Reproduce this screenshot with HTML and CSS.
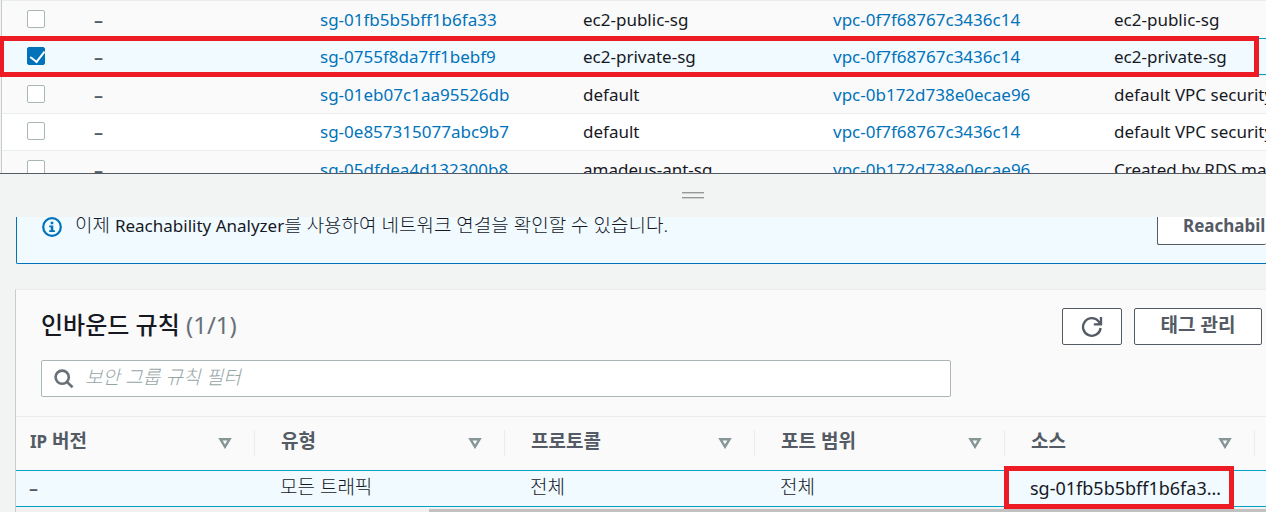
FILE: index.html
```html
<!DOCTYPE html>
<html lang="ko">
<head>
<meta charset="utf-8">
<title>보안 그룹</title>
<link rel="stylesheet" href="styles.css">
</head>
<body>
<main class="app">
  <section class="groups" aria-label="보안 그룹">
    <table class="groups-table">
      <colgroup><col class="col-check"><col class="col-name"><col class="col-id"><col class="col-group"><col class="col-vpc"><col class="col-desc"></colgroup>
      <tbody>
        <tr>
          <td><input class="check" type="checkbox" aria-label="sg-01fb5b5bff1b6fa33"></td><td class="dash">–</td>
          <td><a href="#">sg-01fb5b5bff1b6fa33</a></td><td>ec2-public-sg</td>
          <td><a href="#">vpc-0f7f68767c3436c14</a></td><td>ec2-public-sg</td>
        </tr>
        <tr class="selected">
          <td><input class="check" type="checkbox" checked aria-label="sg-0755f8da7ff1bebf9"></td><td class="dash">–</td>
          <td><a href="#">sg-0755f8da7ff1bebf9</a></td><td>ec2-private-sg</td>
          <td><a href="#">vpc-0f7f68767c3436c14</a></td><td>ec2-private-sg</td>
        </tr>
        <tr>
          <td><input class="check" type="checkbox" aria-label="sg-01eb07c1aa95526db"></td><td class="dash">–</td>
          <td><a href="#">sg-01eb07c1aa95526db</a></td><td>default</td>
          <td><a href="#">vpc-0b172d738e0ecae96</a></td><td>default VPC security group</td>
        </tr>
        <tr>
          <td><input class="check" type="checkbox" aria-label="sg-0e857315077abc9b7"></td><td class="dash">–</td>
          <td><a href="#">sg-0e857315077abc9b7</a></td><td>default</td>
          <td><a href="#">vpc-0f7f68767c3436c14</a></td><td>default VPC security group</td>
        </tr>
        <tr>
          <td><input class="check" type="checkbox" aria-label="sg-05dfdea4d132300b8"></td><td class="dash">–</td>
          <td><a href="#">sg-05dfdea4d132300b8</a></td><td>amadeus-ant-sg</td>
          <td><a href="#">vpc-0b172d738e0ecae96</a></td><td>Created by RDS management console</td>
        </tr>
      </tbody>
    </table>
    <div class="mark mark-group"></div>
  </section>

  <div class="splitter"><span class="grip"></span></div>

  <section class="details">
    <div class="alert">
      <svg class="info" viewBox="0 0 20 20" aria-hidden="true"><circle cx="10" cy="10" r="8.8" fill="none" stroke="#0073bb" stroke-width="2.2"/><path d="M8.7 4.8h2.6v2.4H8.7zM7.2 8.4h4.1v4.8h1.6v1.9H7.2v-1.9h1.6v-2.9H7.2z" fill="#0073bb"/></svg>
      <p class="alert-text">이제 <span class="latin">Reachability Analyzer</span>를 사용하여 네트워크 연결을 확인할 수 있습니다.</p>
      <button class="btn btn-alert" type="button">Reachability Analyzer</button>
    </div>

    <div class="card">
      <header class="card-head">
        <h2 class="title">인바운드 규칙 <span class="count">(1/1)</span></h2>
        <div class="actions">
          <button class="btn btn-icon" type="button" aria-label="새로 고침"><svg class="refresh" viewBox="0 0 22 22" fill="none" stroke="#545b64" stroke-width="2.3" aria-hidden="true"><path d="M19.6 12A8.8 8.8 0 1 1 17.8 5.6L19 7.2"/><path d="M20 1v7.3h-7.2"/><path d="M19.5 4.5v3.3h-3.8z" fill="#545b64" stroke="none"/></svg></button>
          <button class="btn btn-tag" type="button">태그 관리</button>
        </div>
      </header>
      <label class="search">
        <svg class="lens" viewBox="0 0 20 20" fill="none" stroke="#687078" stroke-width="2.6" aria-hidden="true"><circle cx="8.2" cy="8.2" r="6.6"/><path d="M13 13l5.6 5.2"/></svg>
        <input class="search-input" type="text" placeholder="보안 그룹 규칙 필터" aria-label="보안 그룹 규칙 필터">
      </label>
      <table class="rules">
        <colgroup><col class="rule-first"><col class="rule"><col class="rule"><col class="rule"><col class="rule"><col class="rule-rest"></colgroup>
        <thead>
          <tr>
            <th><div class="th"><span><span class="th-latin">IP</span> 버전</span><svg class="sort" viewBox="0 0 14 12"><path d="M2.4 2.2h9.2L7 9.8z"/></svg></div></th>
            <th><div class="th">유형<svg class="sort" viewBox="0 0 14 12"><path d="M2.4 2.2h9.2L7 9.8z"/></svg></div></th>
            <th><div class="th">프로토콜<svg class="sort" viewBox="0 0 14 12"><path d="M2.4 2.2h9.2L7 9.8z"/></svg></div></th>
            <th><div class="th">포트 범위<svg class="sort" viewBox="0 0 14 12"><path d="M2.4 2.2h9.2L7 9.8z"/></svg></div></th>
            <th><div class="th">소스<svg class="sort" viewBox="0 0 14 12"><path d="M2.4 2.2h9.2L7 9.8z"/></svg></div></th>
            <td></td>
          </tr>
        </thead>
        <tbody>
          <tr>
            <td class="dash">–</td><td class="ko">모든 트래픽</td><td class="ko">전체</td><td class="ko">전체</td>
            <td class="source">sg-01fb5b5bff1b6fa3…<div class="mark mark-source"></div></td><td></td>
          </tr>
        </tbody>
      </table>
      <div class="scroll"><div class="thumb"></div></div>
    </div>
  </section>
</main>
</body>
</html>
```
FILE: styles.css
```css
* { box-sizing: border-box; }

body {
  margin: 0;
  background: #f2f3f3;
  color: #16191f;
  font: 17px/22px "Noto Sans", "Noto Sans CJK KR", sans-serif;
}

.app {
  display: flex;
  flex-direction: column;
  height: 100vh;
  overflow: hidden;
}

a { color: #0073bb; text-decoration: none; }

/* security group list */
.groups {
  position: relative;
  flex: none;
  height: 174px;
  padding-left: 1px;
  overflow: hidden;
  border-bottom: 1px solid #545b64;
}

.groups-table {
  width: 100%;
  table-layout: fixed;
  border-collapse: separate;
  border-spacing: 0;
  border-left: 1px solid #c8cccc;
  white-space: nowrap;
}

.col-check { width: 92px; }
.col-name { width: 226px; }
.col-id { width: 263px; }
.col-group { width: 250px; }
.col-vpc { width: 281px; }

.groups-table td {
  height: 37px;
  padding: 0;
  border-top: 1px solid #eaeded;
  background: #fafafa;
}

.groups-table tr:nth-child(odd) td { height: 38px; }
.groups-table tr:nth-child(even) td { background: #fff; }

.groups-table tr.selected td {
  border-top-color: #00a1c9;
  border-bottom: 1px solid #00a1c9;
  background: #f1faff;
}

.groups-table td:first-child { padding: 0 0 2px 25px; }
.dash { color: #545b64; font-size: 18px; font-weight: 600; }

.check {
  display: block;
  appearance: none;
  width: 18px;
  height: 18px;
  margin: 0;
  border: 1px solid #aab7b8;
  border-radius: 2px;
  background: #fff;
}

.check:checked {
  border-color: #0073bb;
  background: #0073bb;
}

.check:checked::before {
  content: "";
  display: block;
  width: 7px;
  height: 12px;
  margin-left: 5px;
  border: solid #fff;
  border-width: 0 2px 2px 0;
  transform: rotate(38deg);
}

.mark {
  position: absolute;
  border: 5px solid #ed1c24;
  pointer-events: none;
}

.mark-group { top: 36px; right: 7px; left: -1px; height: 41px; }

/* split panel handle */
.splitter {
  display: flex;
  flex: none;
  align-items: center;
  justify-content: center;
  height: 43px;
  padding: 0 0 2px 120px;
}

.grip {
  width: 22px;
  height: 6px;
  border: solid #969999;
  border-width: 1px 0;
  box-shadow: 0 1px #cfd1d1, inset 0 1px #cfd1d1;
}

.details {
  flex: 1;
  min-height: 0;
  padding-left: 15px;
  overflow: hidden;
}

.alert {
  display: flex;
  height: 47px;
  margin-left: 1px;
  padding-left: 25px;
  border: solid #0073bb;
  border-width: 0 0 1px 1px;
  border-radius: 0 0 0 2px;
  background: #f1faff;
}

.info { flex: none; width: 20px; height: 20px; }

.alert-text {
  flex: 1;
  margin: -3px 0 0 13px;
  font-size: 19px;
  font-weight: 300;
  white-space: nowrap;
}

.latin { font-size: 17px; font-weight: 400; }

.btn {
  flex: none;
  height: 37px;
  padding: 0;
  border: 1px solid #545b64;
  border-radius: 2px;
  background: #fff;
  color: #545b64;
  font: 700 17px/22px "Noto Sans", "Noto Sans CJK KR", sans-serif;
  white-space: nowrap;
}

.btn-alert {
  width: 109px;
  margin-top: -9px;
  padding: 0 0 2px 25px;
  overflow: hidden;
  border-right: 0;
  text-align: left;
}

.card {
  margin-top: 25px;
  border: solid #eaeded;
  border-width: 1px 0 0 1px;
  border-left-color: #c8cccc;
  background: #fafafa;
}

.card-head {
  display: flex;
  align-items: flex-start;
  justify-content: space-between;
  padding: 18px 4px 15px 25px;
}

.title {
  margin: 0;
  font: 500 24px/34px "Noto Sans", "Noto Sans CJK KR", sans-serif;
}

.count { color: #687078; font-weight: 400; }
.actions { display: flex; gap: 12px; }
.btn-icon { display: flex; align-items: center; justify-content: center; width: 60px; }
.refresh { width: 22px; height: 22px; }
.btn-tag { width: 128px; padding-bottom: 4px; font-size: 19px; }

.search {
  display: flex;
  align-items: center;
  max-width: 910px;
  height: 37px;
  margin-left: 25px;
  padding-left: 12px;
  border: 1px solid #aab7b8;
  border-radius: 2px;
  background: #fff;
}

.lens { flex: none; width: 20px; height: 20px; }

.search-input {
  flex: 1;
  min-width: 0;
  height: 35px;
  padding: 0 11px 6px;
  border: 0;
  outline: 0;
  background: none;
  font: 300 19px/22px "Noto Sans CJK KR", sans-serif;
}

.search-input::placeholder { color: #95a5a6; font-style: italic; opacity: 1; }

/* inbound rules */
.rules {
  width: 100%;
  margin-top: 19px;
  table-layout: fixed;
  border-collapse: separate;
  border-spacing: 0;
  border-top: 1px solid #eaeded;
}

.rule-first { width: 239px; }
.rule { width: 250px; }

.rules th { height: 53px; padding: 0 0 2px; }

.th {
  display: flex;
  align-items: flex-start;
  height: 26px;
  padding: 0 22px 0 26px;
  border-right: 1px solid #eaeded;
  color: #545b64;
  font-size: 19px;
  line-height: 22px;
  text-align: left;
}

.th-latin { font-size: 17px; }
.rules th:first-child .th { padding-left: 14px; }

.sort {
  width: 14px;
  height: 12px;
  margin: 7px 0 0 auto;
  fill: none;
  stroke: #879596;
  stroke-width: 2.4;
}

.rules tbody td {
  height: 37px;
  padding: 0 0 2px 25px;
  border: solid #00a1c9;
  border-width: 1px 0;
  background: #f1faff;
}

.rules tbody td:first-child { padding-left: 13px; }
.rules tbody .ko { padding-bottom: 4px; font-size: 19px; font-weight: 300; }
.rules .source { position: relative; font-size: 18px; white-space: nowrap; }
.mark-source { top: -5px; left: -1px; width: 230px; height: 43px; }

.scroll { height: 16px; padding: 2px 0 0 413px; background: #f1f1f1; }
.thumb { height: 12px; background: #c1c1c1; }
```
